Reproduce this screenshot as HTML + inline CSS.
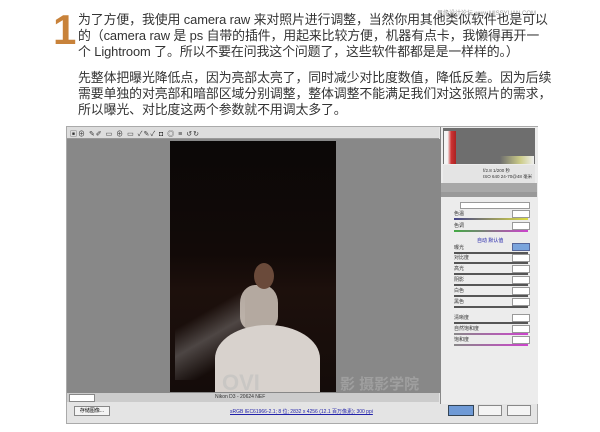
<!DOCTYPE html>
<html><head><meta charset="utf-8"><style>
body{margin:0;width:600px;height:432px;background:#fff;position:relative;overflow:hidden;font-family:"Liberation Sans","Noto Sans CJK SC",sans-serif}
.a{position:absolute}
.t{left:78px;font-size:12.9px;color:#333;line-height:16px;white-space:nowrap;letter-spacing:-0.1px}
.sl{position:absolute;left:454px;width:74px;height:2px;background:#555}
.lb{position:absolute;left:454px;font-size:5px;color:#333}
.bx{position:absolute;left:512px;width:16px;height:6px;background:#fff;border:1px solid #999}
</style></head><body>
<div class="a" style="left:53px;top:9px;font-size:42px;font-weight:bold;color:#c8823a;line-height:42px">1</div>
<div class="a" style="left:437px;top:8px;font-size:6px;color:#999">思缘设计论坛 www.MISSYUAN.COM</div>
<div class="a t" style="top:12px">为了方便，我使用 camera raw 来对照片进行调整，当然你用其他类似软件也是可以<br>的（camera raw 是 ps 自带的插件，用起来比较方便，机器有点卡，我懒得再开一<br>个 Lightroom 了。所以不要在问我这个问题了，这些软件都都是是一样样的。）</div>
<div class="a t" style="top:70px">先整体把曝光降低点，因为亮部太亮了，同时减少对比度数值，降低反差。因为后续<br>需要单独的对亮部和暗部区域分别调整，整体调整不能满足我们对这张照片的需求，<br>所以曝光、对比度这两个参数就不用调太多了。</div>
<div class="a" style="left:66px;top:126px;width:472px;height:298px;background:#e4e4e4;border:1px solid #aaa;box-sizing:border-box"></div>
<div class="a" style="left:67px;top:127px;width:372px;height:11px;background:#ddd;border-bottom:1px solid #999"></div>
<div class="a" style="left:70px;top:129px;font-size:7px;color:#333;letter-spacing:1px">▣⊕ ✎✐ ▭ ⊕ ▭ ✓✎✓ ◘ ◎ ≡ ↺↻</div>
<div class="a" style="left:67px;top:139px;width:373px;height:254px;background:#888"></div>
<div class="a" style="left:170px;top:141px;width:166px;height:251px;background:linear-gradient(#0b0807 0%,#120a08 45%,#1d100c 60%,#140c0a 100%)"></div>
<div class="a" style="left:175px;top:280px;width:70px;height:100px;background:linear-gradient(150deg,transparent 35%,rgba(200,200,200,.3) 55%,transparent 80%)"></div>
<div class="a" style="left:240px;top:285px;width:38px;height:45px;border-radius:40% 40% 30% 30%;background:#cfc4bb;opacity:.85"></div>
<div class="a" style="left:215px;top:325px;width:105px;height:67px;border-radius:50% 50% 0 0;background:#d8d2cd"></div>
<div class="a" style="left:254px;top:263px;width:20px;height:26px;border-radius:50%;background:#6a4a3a"></div>
<div class="a" style="left:222px;top:370px;font-size:22px;font-weight:bold;color:rgba(190,190,190,.55)">OVI</div>
<div class="a" style="left:340px;top:373px;font-size:15px;font-weight:bold;color:rgba(170,170,170,.7)">影 摄影学院</div>
<div class="a" style="left:67px;top:393px;width:372px;height:9px;background:#ccc"></div>
<div class="a" style="left:69px;top:394px;width:24px;height:6px;background:#fff;border:1px solid #888"></div>
<div class="a" style="left:215px;top:394px;font-size:5px;color:#333">Nikon D3 - 20624 NEF</div>
<div class="a" style="left:74px;top:406px;width:34px;height:8px;background:#f4f4f4;border:1px solid #888;font-size:5px;line-height:8px;text-align:center">存储图像...</div>
<div class="a" style="left:230px;top:408px;font-size:5px;color:#22a;text-decoration:underline">sRGB IEC61966-2.1; 8 位; 2832 x 4256 (12.1 百万像素); 300 ppi</div>
<div class="a" style="left:448px;top:405px;width:24px;height:9px;background:#6f9ad6;border:1px solid #345"></div>
<div class="a" style="left:478px;top:405px;width:22px;height:9px;background:#f4f4f4;border:1px solid #888"></div>
<div class="a" style="left:507px;top:405px;width:22px;height:9px;background:#f4f4f4;border:1px solid #888"></div>
<div class="a" style="left:440px;top:127px;width:97px;height:277px;background:#ececec;border-left:1px solid #888"></div>
<div class="a" style="left:443px;top:128px;width:92px;height:36px;background:#6e6e6e"></div>
<div class="a" style="left:444px;top:131px;width:12px;height:33px;background:linear-gradient(90deg,#f4f4f4 30%,#c33 60%,#a22)"></div>
<div class="a" style="left:500px;top:156px;width:34px;height:8px;background:linear-gradient(90deg,#6e6e6e,#cc8 60%,#eee)"></div>
<div class="a" style="left:443px;top:165px;width:92px;height:18px;background:#e4e4e4;font-size:4.5px;color:#333;padding:3px 0 0 40px;box-sizing:border-box">f/2.8 1/200 秒<br>ISO 640 24-70@48 毫米</div>
<div class="a" style="left:441px;top:183px;width:96px;height:9px;background:#a8a8a8"></div>
<div class="a" style="left:441px;top:192px;width:96px;height:5px;background:#999"></div>
<div class="a" style="left:460px;top:202px;width:68px;height:5px;background:#fff;border:1px solid #999"></div>
<div class="lb" style="top:210px">色温</div><div class="bx" style="top:210px"></div><div class="sl" style="top:218px;background:linear-gradient(90deg,#448,#dd4)"></div>
<div class="lb" style="top:222px">色调</div><div class="bx" style="top:222px"></div><div class="sl" style="top:230px;background:linear-gradient(90deg,#4a4,#c4c)"></div>
<div class="a" style="left:477px;top:237px;font-size:5px;color:#22a">自动 默认值</div>
<div class="a" style="left:512px;top:243px;width:16px;height:6px;background:#7aa4dc;border:1px solid #569"></div>
<div class="lb" style="top:244px">曝光</div><div class="sl" style="top:252px"></div>
<div class="lb" style="top:254px">对比度</div><div class="bx" style="top:254px"></div><div class="sl" style="top:262px"></div>
<div class="lb" style="top:265px">高光</div><div class="bx" style="top:265px"></div><div class="sl" style="top:273px"></div>
<div class="lb" style="top:276px">阴影</div><div class="bx" style="top:276px"></div><div class="sl" style="top:284px"></div>
<div class="lb" style="top:287px">白色</div><div class="bx" style="top:287px"></div><div class="sl" style="top:295px"></div>
<div class="lb" style="top:298px">黑色</div><div class="bx" style="top:298px"></div><div class="sl" style="top:306px"></div>
<div class="lb" style="top:314px">清晰度</div><div class="bx" style="top:314px"></div><div class="sl" style="top:322px"></div>
<div class="lb" style="top:325px">自然饱和度</div><div class="bx" style="top:325px"></div><div class="sl" style="top:333px;background:linear-gradient(90deg,#888,#c4c)"></div>
<div class="lb" style="top:336px">饱和度</div><div class="bx" style="top:336px"></div><div class="sl" style="top:344px;background:linear-gradient(90deg,#888,#c4c)"></div>
</body></html>
